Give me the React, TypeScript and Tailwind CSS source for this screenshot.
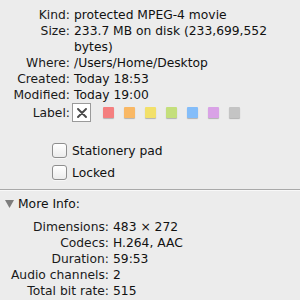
import React from 'react'

const FONT = { fontFamily: '"DejaVu Sans", "Liberation Sans", sans-serif' }

const LABEL_COLORS = ['#f47f7f', '#f9b865', '#f2e06a', '#c4df7c', '#84bdf9', '#d9a2e6', '#c4c4c4']

function InfoRow({ label, children, width }: { label: string; children: React.ReactNode; width: string }) {
  return (
    <div className="flex leading-4">
      <div className={`${width} shrink-0 text-right text-[#1a1a1a]`}>{label}</div>
      <div className="pl-[4px] text-[#111]">{children}</div>
    </div>
  )
}

function Checkbox({ label }: { label: string }) {
  return (
    <div className="flex h-[15px] items-center">
      <div className="ml-[52px] h-[15px] w-[15px] rounded-[3px] border border-[#8e8e8e] bg-gradient-to-b from-white to-[#ececec] shadow-[0_1px_0_rgba(255,255,255,0.6)]" />
      <span className="ml-[5px] leading-4 text-[#111]">{label}</span>
    </div>
  )
}

export default function App() {
  return (
    <div className="h-[300px] w-[300px] overflow-hidden bg-[#ececec] text-[12.3px]" style={FONT}>
      {/* General */}
      <div className="pt-[7px]">
        <InfoRow label="Kind:" width="w-[70px]">protected MPEG-4 movie</InfoRow>
        <InfoRow label="Size:" width="w-[70px]">
          233.7 MB on disk (233,699,552
          <br />
          bytes)
        </InfoRow>
        <InfoRow label="Where:" width="w-[70px]">/Users/Home/Desktop</InfoRow>
        <InfoRow label="Created:" width="w-[70px]">Today 18:53</InfoRow>
        <InfoRow label="Modified:" width="w-[70px]">Today 19:00</InfoRow>

        <div className="flex h-[19px] items-center">
          <div className="w-[70px] text-right leading-4 text-[#1a1a1a]">Label:</div>
          <div className="ml-[2px] flex h-[19px] w-[19px] items-center justify-center border border-[#9a9a9a] bg-white">
            <svg width="10" height="10" viewBox="0 0 10 10">
              <path d="M1 1 L9 9 M9 1 L1 9" stroke="#4a4a4a" strokeWidth="1.9" strokeLinecap="round" />
            </svg>
          </div>
          <div className="ml-[12px] flex gap-[10px]">
            {LABEL_COLORS.map((c) => (
              <div
                key={c}
                className="h-[11px] w-[11px] rounded-[1px] shadow-[0_1px_1px_rgba(0,0,0,0.25)]"
                style={{ backgroundColor: c }}
              />
            ))}
          </div>
        </div>

        <div className="mt-[21px] flex flex-col gap-[7px]">
          <Checkbox label="Stationery pad" />
          <Checkbox label="Locked" />
        </div>
      </div>

      {/* More Info */}
      <div className="mt-[9px] border-t border-[#a9a9a9] shadow-[inset_0_1px_0_#f8f8f8]">
        <div className="flex h-[27px] items-center">
          <svg className="ml-[5px]" width="9" height="8" viewBox="0 0 9 8">
            <path d="M0 0 H9 L4.5 8 Z" fill="#7d7d7d" />
          </svg>
          <span className="ml-[4px] leading-4 text-[#111]">More Info:</span>
        </div>
        <div className="pt-[2px]">
          <InfoRow label="Dimensions:" width="w-[109px]">483 × 272</InfoRow>
          <InfoRow label="Codecs:" width="w-[109px]">H.264, AAC</InfoRow>
          <InfoRow label="Duration:" width="w-[109px]">59:53</InfoRow>
          <InfoRow label="Audio channels:" width="w-[109px]">2</InfoRow>
          <InfoRow label="Total bit rate:" width="w-[109px]">515</InfoRow>
        </div>
      </div>
    </div>
  )
}
